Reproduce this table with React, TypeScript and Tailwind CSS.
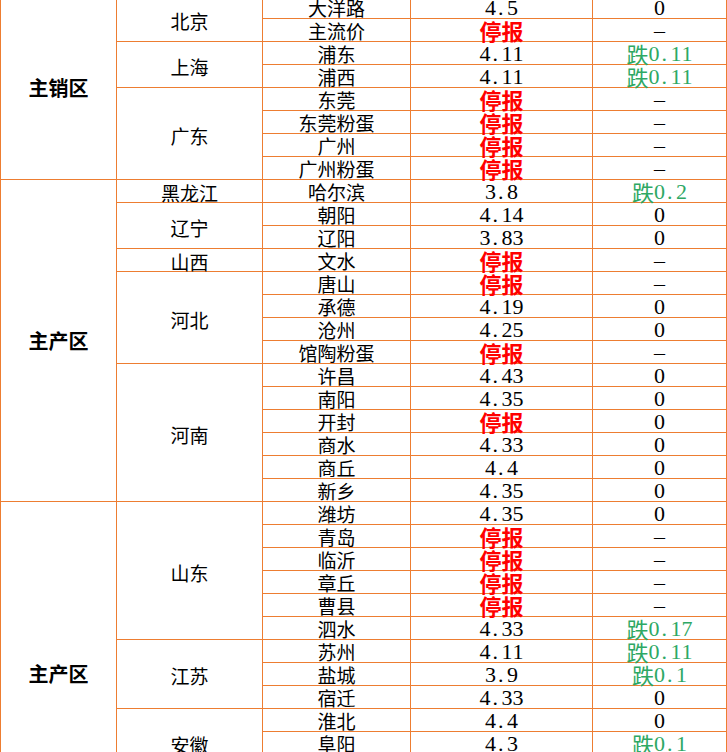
const RS: Record<number, string> = {
  1: 'row-span-1',
  2: 'row-span-2',
  3: 'row-span-3',
  4: 'row-span-4',
  6: 'row-span-6',
  8: 'row-span-8',
  14: 'row-span-14',
  15: 'row-span-15',
};

type City = { name: string; price: string; change: string };
type Province = { name: string; cities: City[] };
type Region = { name: string; provinces: Province[] };

const STOP = '停报';

const data: Region[] = [
  {
    name: '主销区',
    provinces: [
      { name: '北京', cities: [
        { name: '大洋路', price: '4.5', change: '0' },
        { name: '主流价', price: STOP, change: '-' },
      ] },
      { name: '上海', cities: [
        { name: '浦东', price: '4.11', change: '跌0.11' },
        { name: '浦西', price: '4.11', change: '跌0.11' },
      ] },
      { name: '广东', cities: [
        { name: '东莞', price: STOP, change: '-' },
        { name: '东莞粉蛋', price: STOP, change: '-' },
        { name: '广州', price: STOP, change: '-' },
        { name: '广州粉蛋', price: STOP, change: '-' },
      ] },
    ],
  },
  {
    name: '主产区',
    provinces: [
      { name: '黑龙江', cities: [{ name: '哈尔滨', price: '3.8', change: '跌0.2' }] },
      { name: '辽宁', cities: [
        { name: '朝阳', price: '4.14', change: '0' },
        { name: '辽阳', price: '3.83', change: '0' },
      ] },
      { name: '山西', cities: [{ name: '文水', price: STOP, change: '-' }] },
      { name: '河北', cities: [
        { name: '唐山', price: STOP, change: '-' },
        { name: '承德', price: '4.19', change: '0' },
        { name: '沧州', price: '4.25', change: '0' },
        { name: '馆陶粉蛋', price: STOP, change: '-' },
      ] },
      { name: '河南', cities: [
        { name: '许昌', price: '4.43', change: '0' },
        { name: '南阳', price: '4.35', change: '0' },
        { name: '开封', price: STOP, change: '0' },
        { name: '商水', price: '4.33', change: '0' },
        { name: '商丘', price: '4.4', change: '0' },
        { name: '新乡', price: '4.35', change: '0' },
      ] },
    ],
  },
  {
    name: '主产区',
    provinces: [
      { name: '山东', cities: [
        { name: '潍坊', price: '4.35', change: '0' },
        { name: '青岛', price: STOP, change: '-' },
        { name: '临沂', price: STOP, change: '-' },
        { name: '章丘', price: STOP, change: '-' },
        { name: '曹县', price: STOP, change: '-' },
        { name: '泗水', price: '4.33', change: '跌0.17' },
      ] },
      { name: '江苏', cities: [
        { name: '苏州', price: '4.11', change: '跌0.11' },
        { name: '盐城', price: '3.9', change: '跌0.1' },
        { name: '宿迁', price: '4.33', change: '0' },
      ] },
      { name: '安徽', cities: [
        { name: '淮北', price: '4.4', change: '0' },
        { name: '阜阳', price: '4.3', change: '跌0.1' },
        { name: '宿州', price: '4.3', change: '0' },
      ] },
      { name: '湖北', cities: [
        { name: '武汉', price: '4.4', change: '0' },
        { name: '荆门', price: '4.3', change: '0' },
        { name: '随州', price: '4.3', change: '0' },
      ] },
    ],
  },
];

const cell = 'border-r border-b border-[#ed7d31] flex justify-center whitespace-nowrap';
const cjk = { fontFamily: '"Noto Sans CJK SC", sans-serif' };

// SimSun-like fixed cells for half-width characters
function Num({ text }: { text: string }) {
  return (
    <span className="inline-flex" style={{ fontFamily: '"Liberation Serif", "Noto Sans CJK SC", serif' }}>
      {text.split('').map((ch, i) =>
        /[0-9.\-]/.test(ch) ? (
          <span key={i} className={`inline-block w-[0.5em] ${ch === '.' ? 'text-left pl-[2px]' : 'text-center'}`}>
            {ch === '-' ? '–' : ch}
          </span>
        ) : (
          <span key={i} className="inline-block w-[1em] text-center" style={cjk}>{ch}</span>
        )
      )}
    </span>
  );
}

export default function App() {
  return (
    <div className="w-[727px] bg-white overflow-hidden h-[752px]">
      <div className="mt-[-4px] grid grid-cols-[116px_146px_148px_182px_134px] auto-rows-[23px] border-l border-[#ed7d31] text-black">
        {data.map((r, ri) => {
          const count = r.provinces.reduce((a, p) => a + p.cities.length, 0);
          return r.provinces.map((p, pi) =>
            p.cities.map((c, ci) => (
              <>
                {pi === 0 && ci === 0 && (
                  <div key={`r${ri}`} className={`${cell} ${RS[count]} items-center font-bold text-[20px] leading-none`} style={cjk}>
                    {r.name}
                  </div>
                )}
                {ci === 0 && (
                  <div key={`p${ri}${pi}`} className={`${cell} ${RS[p.cities.length]} items-center text-[19px] leading-none`} style={cjk}>
                    <span className="pt-[3px]">{p.name}</span>
                  </div>
                )}
                <div key={`c${ri}${pi}${ci}`} className={`${cell} items-end text-[19px] leading-[20px]`} style={cjk}>
                  <span>{c.name}</span>
                </div>
                <div key={`v${ri}${pi}${ci}`} className={`${cell} items-end text-[22px] leading-[21px]`}>
                  {c.price === STOP ? (
                    <span className="font-bold text-[#ff0000]" style={cjk}>{STOP}</span>
                  ) : (
                    <Num text={c.price} />
                  )}
                </div>
                <div key={`d${ri}${pi}${ci}`} className={`${cell} items-end text-[22px] leading-[21px] ${c.change.startsWith('跌') ? 'text-[#2ea864]' : ''}`}>
                  <Num text={c.change} />
                </div>
              </>
            ))
          );
        })}
      </div>
    </div>
  );
}
